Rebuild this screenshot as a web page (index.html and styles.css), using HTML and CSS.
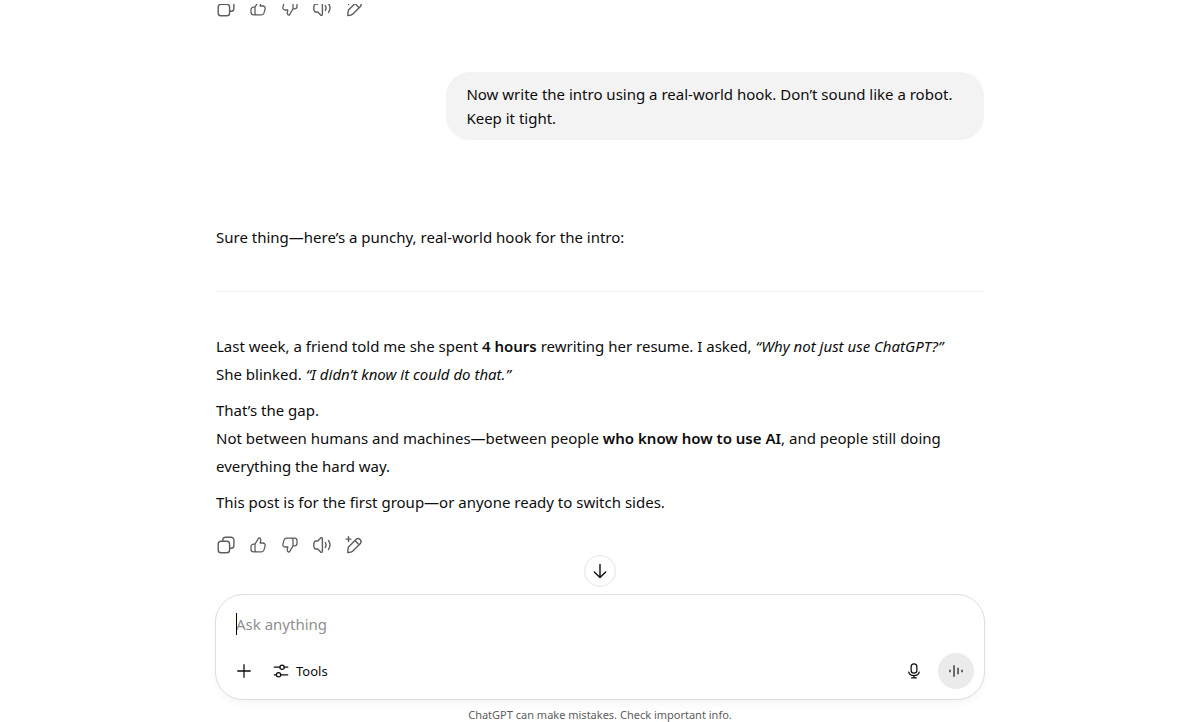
FILE: index.html
```html
<!DOCTYPE html>
<html lang="en">
<head>
<meta charset="utf-8">
<meta name="viewport" content="width=device-width, initial-scale=1">
<title>ChatGPT</title>
<link rel="stylesheet" href="styles.css">
</head>
<body>
<svg class="sprite" aria-hidden="true">
  <symbol id="copy" viewBox="0 0 20 20"><rect x="2.2" y="6.3" width="11.4" height="11.4" rx="2.8"/><path d="M6.8 6.2V5a2.8 2.8 0 0 1 2.8-2.8h5.5A2.8 2.8 0 0 1 17.9 5v5.5a2.8 2.8 0 0 1-2.8 2.8h-1.4"/></symbol>
  <symbol id="up" viewBox="-1 -1 22 22"><path d="M6.7 9 10.8 2.2c1.6.1 2.6 1.4 2.2 2.9l-.7 2.7h3.1c1.7 0 2.8 1.5 2.4 3.1l-1.2 4.5c-.4 1.3-1.400 2.200-2.800 2.200H5.200A2.900 2.900 0 0 1 2.300 14.700v-2.800A2.900 2.900 0 0 1 5.200 9zM6.700 9v6.200c0 1.400.8 2.400 2 2.400"/></symbol>
  <symbol id="down" viewBox="-1 -1 22 22"><path d="M13.300 11 9.200 17.800c-1.600-.1-2.600-1.400-2.200-2.900l.7-2.700H4.600c-1.700 0-2.800-1.500-2.400-3.100l1.200-4.500c.4-1.300 1.400-2.200 2.800-2.200h8.600a2.900 2.900 0 0 1 2.900 2.900v2.800a2.900 2.900 0 0 1-2.900 2.900zM13.300 11V4.800c0-1.400-.8-2.400-2-2.400"/></symbol>
  <symbol id="sound" viewBox="0 0 20 20"><path d="M10.400 3.700v12.600c0 1-1 1.400-1.700.8L5.700 14H3.900C1.100 14 1.100 6 3.900 6h1.800l3-3.100c.7-.6 1.700-.2 1.700.8zM13.300 7.600c.9 1.500.9 3.300 0 4.800M16.600 5.600c1.700 2.700 1.700 6.100 0 8.800"/></symbol>
  <symbol id="edit" viewBox="0 0 20 20"><path d="m4.500 12 7.700-7.700a3 3 0 0 1 4.200 4.200l-7.800 7.700c-.8.800-2.400 1.100-4.800 1.400.1-2.500.1-4.700.7-5.600zM11 5.600l4.100 4.100M4.500 1.600v5M2 4.100h5"/></symbol>
  <symbol id="arrow" viewBox="0 0 20 20"><path d="M10 3.500v13M4.300 10.900l5.700 5.600 5.700-5.600"/></symbol>
  <symbol id="plus" viewBox="0 0 20 20"><path d="M10 3v14M3 10h14"/></symbol>
  <symbol id="tools" viewBox="0 0 20 20"><path d="M2.500 5.800h6.200M13.700 5.800h3.800M2.500 14.200h2.300M9.800 14.200h7.700"/><circle cx="11.200" cy="5.800" r="2.400"/><circle cx="7.300" cy="14.200" r="2.400"/></symbol>
  <symbol id="mic" viewBox="0 0 20 20"><rect x="6.800" y="2" width="6.400" height="10.400" rx="3.200"/><path d="M4.200 11.200c1.200 5.100 10.400 5.100 11.600 0M10 15v2.700M7.400 17.700h5.200"/></symbol>
  <symbol id="voice" viewBox="0 0 20 20"><path d="M3.300 8.500v3M7.800 3.500v13M12.300 6.500v7M16.700 8.500v3"/></symbol>
</svg>
<main class="chat">
  <section class="thread">
    <div class="column">
      <div class="actions">
        <button class="icon-button" aria-label="Copy"><svg><use href="#copy"/></svg></button>
        <button class="icon-button" aria-label="Good response"><svg><use href="#up"/></svg></button>
        <button class="icon-button" aria-label="Bad response"><svg><use href="#down"/></svg></button>
        <button class="icon-button" aria-label="Read aloud"><svg><use href="#sound"/></svg></button>
        <button class="icon-button" aria-label="Edit in canvas"><svg><use href="#edit"/></svg></button>
      </div>
      <div class="bubble">Now write the intro using a real-world hook. Don’t sound like a robot. Keep it tight.</div>
      <article class="answer">
        <p>Sure thing—here’s a punchy, real-world hook for the intro:</p>
        <hr>
        <p>Last week, a friend told me she spent <strong>4 hours</strong> rewriting her resume. I asked, <em>“Why not just use ChatGPT?”</em><br>She blinked. <em>“I didn’t know it could do that.”</em></p>
        <p>That’s the gap.<br>Not between humans and machines—between people <strong>who know how to use AI</strong>, and people still doing everything the hard way.</p>
        <p>This post is for the first group—or anyone ready to switch sides.</p>
      </article>
      <div class="actions">
        <button class="icon-button" aria-label="Copy"><svg><use href="#copy"/></svg></button>
        <button class="icon-button" aria-label="Good response"><svg><use href="#up"/></svg></button>
        <button class="icon-button" aria-label="Bad response"><svg><use href="#down"/></svg></button>
        <button class="icon-button" aria-label="Read aloud"><svg><use href="#sound"/></svg></button>
        <button class="icon-button" aria-label="Edit in canvas"><svg><use href="#edit"/></svg></button>
      </div>
    </div>
  </section>
  <form class="composer">
    <button class="scroll-down" type="button" aria-label="Scroll to bottom"><svg><use href="#arrow"/></svg></button>
    <div class="field">
      <input class="prompt" type="text" aria-label="Message" placeholder="Ask anything">
      <span class="caret"></span>
    </div>
    <div class="toolbar">
      <button class="tool" type="button" aria-label="Add files"><svg><use href="#plus"/></svg></button>
      <button class="tool tool-labelled" type="button"><svg><use href="#tools"/></svg>Tools</button>
      <button class="tool push" type="button" aria-label="Dictate"><svg><use href="#mic"/></svg></button>
      <button class="tool voice" type="button" aria-label="Use voice mode"><svg><use href="#voice"/></svg></button>
    </div>
  </form>
  <footer class="note">ChatGPT can make mistakes. Check important info.</footer>
</main>
</body>
</html>
```
FILE: styles.css
```css
* { box-sizing: border-box; }

body {
  margin: 0;
  background: #fff;
  color: #0d0d0d;
  font: 15px/28px "Segoe UI", "Noto Sans", sans-serif;
}

button, input { font: inherit; color: inherit; border: 0; background: none; padding: 0; }
button { cursor: pointer; }
svg { display: block; flex: none; width: 18px; height: 18px; fill: none; stroke: currentColor; stroke-width: 1.4; stroke-linecap: round; stroke-linejoin: round; }
.sprite { position: absolute; width: 0; height: 0; }

.chat {
  display: flex;
  flex-direction: column;
  align-items: center;
  height: 100vh;
  padding: 4px 0 0 15px;
}

.thread {
  flex: 1;
  min-height: 0;
  width: 100%;
  display: flex;
  flex-direction: column;
  justify-content: flex-end;
  align-items: center;
  overflow: hidden;
}

.column {
  display: flex;
  flex-direction: column;
  width: 100%;
  max-width: 768px;
  padding-bottom: 33px;
}

.actions { display: flex; margin-left: -6px; color: #5d5d5d; }
.actions svg, .scroll-down svg { width: 20px; height: 20px; }
.icon-button { display: grid; place-items: center; width: 32px; height: 32px; border-radius: 8px; }

.bubble {
  align-self: flex-end;
  max-width: 70%;
  margin: 48px 0 83px;
  padding: 10px 20px;
  border-radius: 24px;
  background: #f3f3f3;
  line-height: 24px;
}

.answer { margin-bottom: 13px; }
.answer p { margin: 0 0 8px; }
.answer p:last-child { margin-bottom: 0; }
.answer hr { margin: 40px 0; border: 0; border-top: 1px solid #f3f3f3; }
.answer strong { font-weight: 600; }

.composer {
  position: relative;
  width: 100%;
  max-width: 770px;
  padding: 10px;
  border: 1px solid #dedede;
  border-radius: 28px;
  background: #fff;
  box-shadow: 0 4px 6px rgba(0, 0, 0, 0.04);
}

.scroll-down {
  position: absolute;
  bottom: calc(100% + 8px);
  left: 50%;
  display: grid;
  place-items: center;
  width: 32px;
  height: 32px;
  margin-left: -16px;
  border: 1px solid #e5e5e5;
  border-radius: 50%;
  background: #fff;
}

.field { position: relative; margin: 4px 10px 15px; height: 29px; }
.prompt { display: block; width: 100%; height: 100%; outline: 0; }
.prompt::placeholder { color: #8f8f8f; opacity: 1; }
.caret { position: absolute; left: 0; top: 4px; width: 1px; height: 22px; background: #000; }

.toolbar { display: flex; align-items: center; }
.tool { display: grid; place-items: center; width: 36px; height: 36px; border-radius: 50%; }
.tool-labelled { display: flex; gap: 6px; width: auto; padding: 0 10px; border-radius: 18px; font-size: 13px; }
.push { margin-left: auto; }
.voice { margin-left: 6px; background: #ebebeb; color: #5d5d5d; }
.voice svg { stroke-width: 2; stroke-linecap: butt; }

.note { padding-top: 8px; color: #5d5d5d; font-size: 11px; line-height: 14px; }
```
